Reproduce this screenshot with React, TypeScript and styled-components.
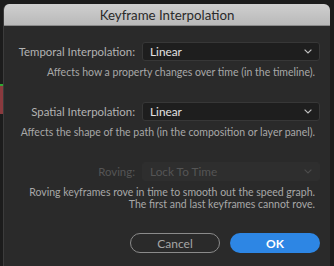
import styled, { createGlobalStyle } from 'styled-components'

const GlobalStyle = createGlobalStyle`
  html, body {
    margin: 0;
    padding: 0;
    background: #1c1c1c;
    overflow: hidden;
  }
  body {
    font-family: Lato, 'Open Sans', sans-serif;
  }
`

const Page = styled.div`
  display: flex;
  width: 334px;
  height: 266px;
`

const Backdrop = styled.div`
  width: 3px;
  display: flex;
  flex-direction: column;
  padding-top: 84px;
`

const Strip = styled.div<{ $color: string; $h: number }>`
  height: ${(p) => p.$h}px;
  background: ${(p) => p.$color};
`

const Window = styled.div`
  margin-top: 4px;
  width: 326px;
  display: flex;
  flex-direction: column;
  background: #2a2a2a;
  border-left: 1px solid #3c3c3c;
  border-radius: 6px 6px 0 0;
  overflow: hidden;
`

const TitleBar = styled.div`
  height: 21px;
  flex-shrink: 0;
  display: flex;
  align-items: center;
  justify-content: center;
  background: linear-gradient(#cfcfcf, #b9b9b9);
  color: #2a2a2a;
  font-size: 13.3px;
  border-bottom: 1px solid #8a8a8a;
`

const Body = styled.div`
  padding: 16px 10px 0 0;
  display: grid;
  grid-template-columns: 1fr 178px;
  column-gap: 7px;
  align-items: center;
`

const Label = styled.div<{ $disabled?: boolean }>`
  text-align: right;
  font-size: 11.4px;
  color: ${(p) => (p.$disabled ? '#555' : '#b3b3b3')};
`

const Select = styled.div<{ $disabled?: boolean }>`
  height: 19px;
  box-sizing: border-box;
  display: flex;
  align-items: center;
  justify-content: space-between;
  padding: 0 7px 0 7px;
  border-radius: 3px;
  background: ${(p) => (p.$disabled ? '#2e2e2e' : '#1e1e1e')};
  border: 1px solid ${(p) => (p.$disabled ? '#2e2e2e' : '#373737')};
  color: ${(p) => (p.$disabled ? '#555' : '#e3e3e3')};
  font-size: 11.8px;
`

const Chevron = styled.svg<{ $disabled?: boolean }>`
  width: 8px;
  height: 5px;
  stroke: ${(p) => (p.$disabled ? '#4a4a4a' : '#bdbdbd')};
  fill: none;
  stroke-width: 1.2;
`

const Note = styled.div<{ $gap: number }>`
  grid-column: 1 / -1;
  text-align: right;
  padding-right: 5px;
  font-size: 10.5px;
  line-height: 12px;
  color: #a8a8a8;
  margin: 5px 0 ${(p) => p.$gap}px;
`

const Footer = styled.div`
  display: flex;
  justify-content: flex-end;
  gap: 10px;
  padding: 0 10px 0 0;
`

const Button = styled.button<{ $primary?: boolean }>`
  width: 90px;
  height: 20px;
  border-radius: 10px;
  font-family: inherit;
  font-size: 12px;
  padding: 0;
  box-sizing: border-box;
  background: ${(p) => (p.$primary ? '#2d86e4' : 'transparent')};
  border: ${(p) => (p.$primary ? 'none' : '1.5px solid #8a8a8a')};
  color: ${(p) => (p.$primary ? '#fff' : '#a6a6a6')};
  font-weight: ${(p) => (p.$primary ? 700 : 400)};
`

function Dropdown({ value, disabled }: { value: string; disabled?: boolean }) {
  return (
    <Select $disabled={disabled}>
      {value}
      <Chevron $disabled={disabled} viewBox="0 0 8 5">
        <path d="M0.6 0.6 L4 4 L7.4 0.6" />
      </Chevron>
    </Select>
  )
}

export default function App() {
  return (
    <>
      <GlobalStyle />
      <Page>
        <Backdrop>
          <Strip $color="#2fa834" $h={2} />
          <Strip $color="#8a3a3e" $h={28} />
        </Backdrop>
        <Window>
          <TitleBar>Keyframe Interpolation</TitleBar>
          <Body>
            <Label>Temporal Interpolation:</Label>
            <Dropdown value="Linear" />
            <Note $gap={24}>Affects how a property changes over time (in the timeline).</Note>

            <Label>Spatial Interpolation:</Label>
            <Dropdown value="Linear" />
            <Note $gap={24}>
              Affects the shape of the path (in the composition or layer panel).
            </Note>

            <Label $disabled>Roving:</Label>
            <Dropdown value="Lock To Time" disabled />
            <Note $gap={23}>
              Roving keyframes rove in time to smooth out the speed graph.
              <br />
              The first and last keyframes cannot rove.
            </Note>
          </Body>
          <Footer>
            <Button>Cancel</Button>
            <Button $primary>OK</Button>
          </Footer>
        </Window>
      </Page>
    </>
  )
}
